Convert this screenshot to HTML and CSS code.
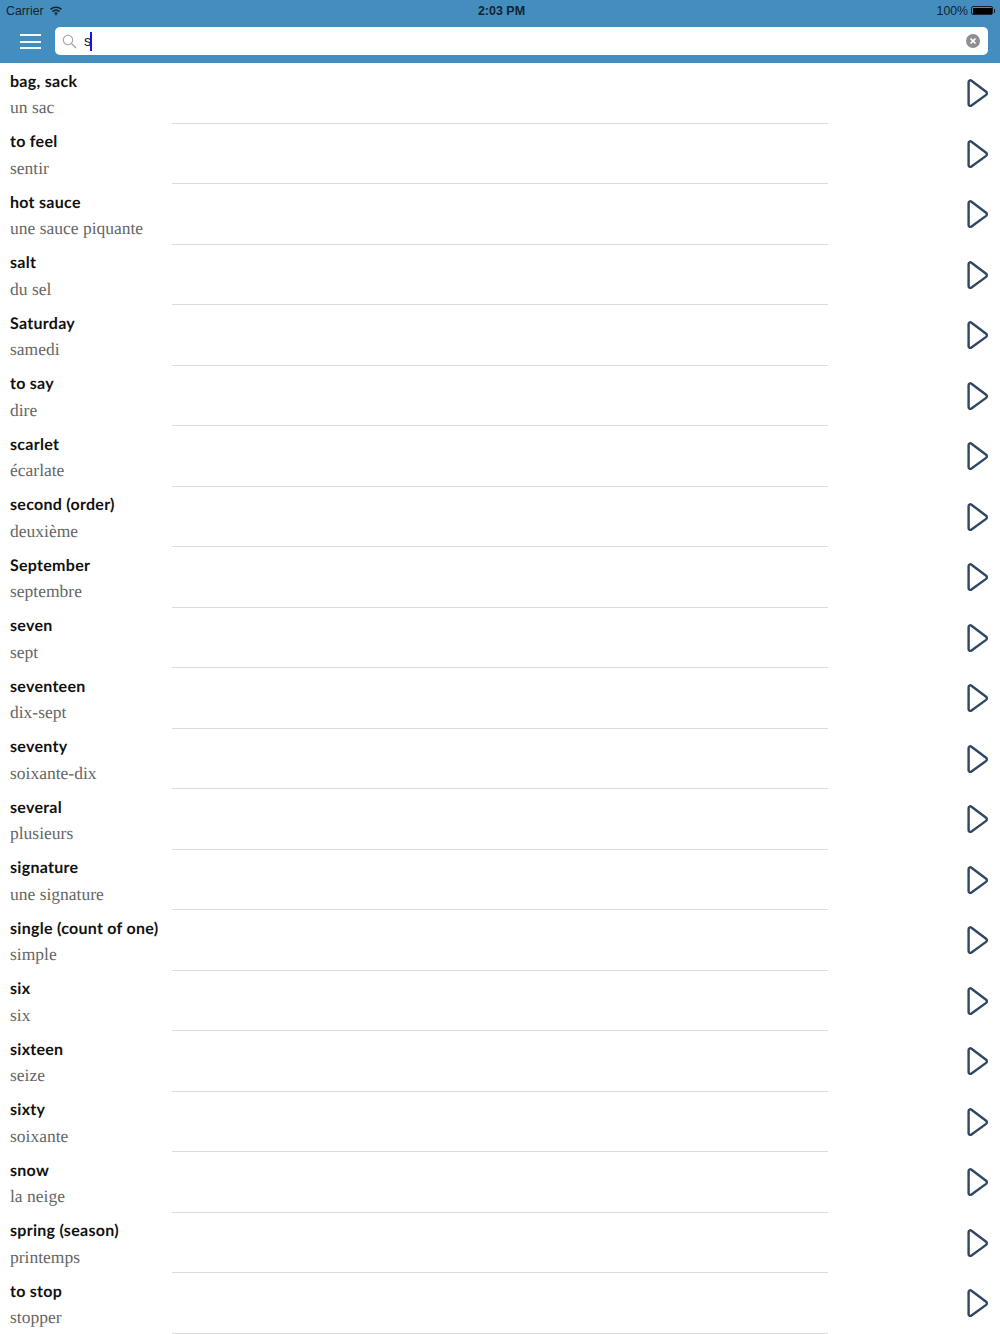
FILE: index.html
```html
<!DOCTYPE html>
<html lang="fr">
<head>
<meta charset="UTF-8">
<meta name="viewport" content="width=device-width, initial-scale=1.0">
<title>Search</title>
<link rel="stylesheet" href="styles.css">
</head>
<body>

<svg class="defs" width="0" height="0">
  <symbol id="play" viewBox="0 0 24 32">
    <path d="M3.600 5.200c0-1.600 1.600-2.400 2.900-1.500l14.600 11c1 .8 1 2.400 0 3.200L6.500 28.500c-1.300.9-2.900.1-2.900-1.500z" fill="none" stroke="#2f4763" stroke-width="2.400" stroke-linejoin="round"/>
  </symbol>
</svg>

<header class="top">
  <div class="status">
    <div class="status-left">
      <span>Carrier</span>
      <svg class="wifi" width="14" height="10" viewBox="0 0 14 10">
        <path d="M1.500 3.400c3.200-2.800 7.800-2.800 11 0M3.500 5.600c2-1.700 5-1.700 7 0M5.400 7.500c1-.7 2.200-.7 3.200 0" fill="none" stroke="#14232f" stroke-width="1.500"/>
        <path d="M7 9.800 5.900 8.500c.6-.5 1.600-.5 2.200 0z" fill="#14232f"/>
      </svg>
    </div>
    <div class="status-time">2:03 PM</div>
    <div class="status-right">
      <span>100%</span>
      <div class="battery"><div class="battery-fill"></div></div>
      <div class="battery-tip"></div>
    </div>
  </div>
  <div class="bar">
    <button class="menu-btn"><span></span><span></span><span></span></button>
    <div class="search">
      <svg class="search-icon" width="15" height="15" viewBox="0 0 15 15">
        <circle cx="6" cy="6" r="4.700" fill="none" stroke="#a3a3a3" stroke-width="1.100"/>
        <path d="M9.500 9.500 14 14" stroke="#a3a3a3" stroke-width="1.300"/>
      </svg>
      <span class="search-text">s</span><span class="caret"></span>
      <svg class="clear" width="14" height="14" viewBox="0 0 14 14">
        <circle cx="7" cy="7" r="7" fill="#8e8e93"/>
        <path d="M4.500 4.500l5 5M9.500 4.500l-5 5" stroke="#fff" stroke-width="1.700"/>
      </svg>
    </div>
  </div>
</header>

<main class="list">
  <div class="row"><div class="words"><div class="en">bag, sack</div><div class="fr">un sac</div></div><div class="line"></div><div class="play"><svg width="24" height="32"><use href="#play"/></svg></div></div>
  <div class="row"><div class="words"><div class="en">to feel</div><div class="fr">sentir</div></div><div class="line"></div><div class="play"><svg width="24" height="32"><use href="#play"/></svg></div></div>
  <div class="row"><div class="words"><div class="en">hot sauce</div><div class="fr">une sauce piquante</div></div><div class="line"></div><div class="play"><svg width="24" height="32"><use href="#play"/></svg></div></div>
  <div class="row"><div class="words"><div class="en">salt</div><div class="fr">du sel</div></div><div class="line"></div><div class="play"><svg width="24" height="32"><use href="#play"/></svg></div></div>
  <div class="row"><div class="words"><div class="en">Saturday</div><div class="fr">samedi</div></div><div class="line"></div><div class="play"><svg width="24" height="32"><use href="#play"/></svg></div></div>
  <div class="row"><div class="words"><div class="en">to say</div><div class="fr">dire</div></div><div class="line"></div><div class="play"><svg width="24" height="32"><use href="#play"/></svg></div></div>
  <div class="row"><div class="words"><div class="en">scarlet</div><div class="fr">écarlate</div></div><div class="line"></div><div class="play"><svg width="24" height="32"><use href="#play"/></svg></div></div>
  <div class="row"><div class="words"><div class="en">second (order)</div><div class="fr">deuxième</div></div><div class="line"></div><div class="play"><svg width="24" height="32"><use href="#play"/></svg></div></div>
  <div class="row"><div class="words"><div class="en">September</div><div class="fr">septembre</div></div><div class="line"></div><div class="play"><svg width="24" height="32"><use href="#play"/></svg></div></div>
  <div class="row"><div class="words"><div class="en">seven</div><div class="fr">sept</div></div><div class="line"></div><div class="play"><svg width="24" height="32"><use href="#play"/></svg></div></div>
  <div class="row"><div class="words"><div class="en">seventeen</div><div class="fr">dix-sept</div></div><div class="line"></div><div class="play"><svg width="24" height="32"><use href="#play"/></svg></div></div>
  <div class="row"><div class="words"><div class="en">seventy</div><div class="fr">soixante-dix</div></div><div class="line"></div><div class="play"><svg width="24" height="32"><use href="#play"/></svg></div></div>
  <div class="row"><div class="words"><div class="en">several</div><div class="fr">plusieurs</div></div><div class="line"></div><div class="play"><svg width="24" height="32"><use href="#play"/></svg></div></div>
  <div class="row"><div class="words"><div class="en">signature</div><div class="fr">une signature</div></div><div class="line"></div><div class="play"><svg width="24" height="32"><use href="#play"/></svg></div></div>
  <div class="row"><div class="words"><div class="en">single (count of one)</div><div class="fr">simple</div></div><div class="line"></div><div class="play"><svg width="24" height="32"><use href="#play"/></svg></div></div>
  <div class="row"><div class="words"><div class="en">six</div><div class="fr">six</div></div><div class="line"></div><div class="play"><svg width="24" height="32"><use href="#play"/></svg></div></div>
  <div class="row"><div class="words"><div class="en">sixteen</div><div class="fr">seize</div></div><div class="line"></div><div class="play"><svg width="24" height="32"><use href="#play"/></svg></div></div>
  <div class="row"><div class="words"><div class="en">sixty</div><div class="fr">soixante</div></div><div class="line"></div><div class="play"><svg width="24" height="32"><use href="#play"/></svg></div></div>
  <div class="row"><div class="words"><div class="en">snow</div><div class="fr">la neige</div></div><div class="line"></div><div class="play"><svg width="24" height="32"><use href="#play"/></svg></div></div>
  <div class="row"><div class="words"><div class="en">spring (season)</div><div class="fr">printemps</div></div><div class="line"></div><div class="play"><svg width="24" height="32"><use href="#play"/></svg></div></div>
  <div class="row"><div class="words"><div class="en">to stop</div><div class="fr">stopper</div></div><div class="line"></div><div class="play"><svg width="24" height="32"><use href="#play"/></svg></div></div>
</main>

</body>
</html>
```

FILE: styles.css
```css
html, body {
  margin: 0;
  padding: 0;
  background-color: #ffffff;
  height: 1334px;
  overflow: hidden;
}
body {
  font-family: "Lato", sans-serif;
  color: #111;
}
.defs {
  display: block;
  height: 0;
}
.top {
  background-color: #448ebf;
  height: 63px;
  box-sizing: border-box;
}
.status {
  height: 27px;
  display: grid;
  grid-template-columns: 1fr auto 1fr;
  align-items: center;
  padding: 0 5px 6px 6px;
  box-sizing: border-box;
  font-family: "Liberation Sans", sans-serif;
  font-size: 12.300px;
  color: #14232f;
}
.status-left {
  display: flex;
  align-items: center;
  gap: 5px;
}
.status-time {
  font-weight: bold;
  font-size: 12.500px;
  margin-left: 2px;
}
.status-right {
  display: flex;
  align-items: center;
  justify-content: flex-end;
}
.battery {
  width: 22px;
  height: 9px;
  margin-left: 3px;
  padding: 0.500px;
  box-sizing: border-box;
  border: 1px solid #14232f;
  border-radius: 2px;
}
.battery-fill {
  background-color: #000;
  height: 100%;
}
.battery-tip {
  width: 1px;
  height: 4px;
  background-color: #14232f;
  margin-left: 1px;
}
.bar {
  display: flex;
  align-items: flex-start;
}
.menu-btn {
  width: 55px;
  height: 28px;
  padding: 6px 0 0 20px;
  margin: 0;
  background: none;
  border: none;
  box-sizing: border-box;
}
.menu-btn span {
  display: block;
  width: 21px;
  height: 2px;
  background-color: #f2f7fb;
  margin-bottom: 4.500px;
}
.search {
  width: 933px;
  height: 28px;
  background-color: #fff;
  border-radius: 5px;
  display: flex;
  align-items: center;
  box-sizing: border-box;
  padding: 0 8px 0 7px;
  font-family: "Liberation Sans", sans-serif;
  font-size: 14.500px;
}
.search-icon {
  margin-right: 7px;
}
.search-text {
  color: #222;
}
.caret {
  width: 2px;
  height: 19px;
  background-color: #1414e6;
  margin-left: -1px;
}
.clear {
  margin-left: auto;
}
.row {
  height: 60.500px;
  display: grid;
  grid-template-columns: 172px 656px 172px;
}
.words {
  padding: 8.500px 0 0 10px;
  white-space: nowrap;
  text-rendering: geometricPrecision;
}
.en {
  font-weight: bold;
  font-size: 16px;
  letter-spacing: 0.280px;
  line-height: 20px;
  color: #111;
}
.fr {
  font-family: "Liberation Serif", serif;
  font-size: 17.500px;
  line-height: 20px;
  margin-top: 5.500px;
  color: #666;
}
.line {
  border-bottom: 1px solid #dcdcdc;
}
.play {
  display: flex;
  justify-content: flex-end;
  align-items: center;
  padding: 0 11px 0 0;
}
```
